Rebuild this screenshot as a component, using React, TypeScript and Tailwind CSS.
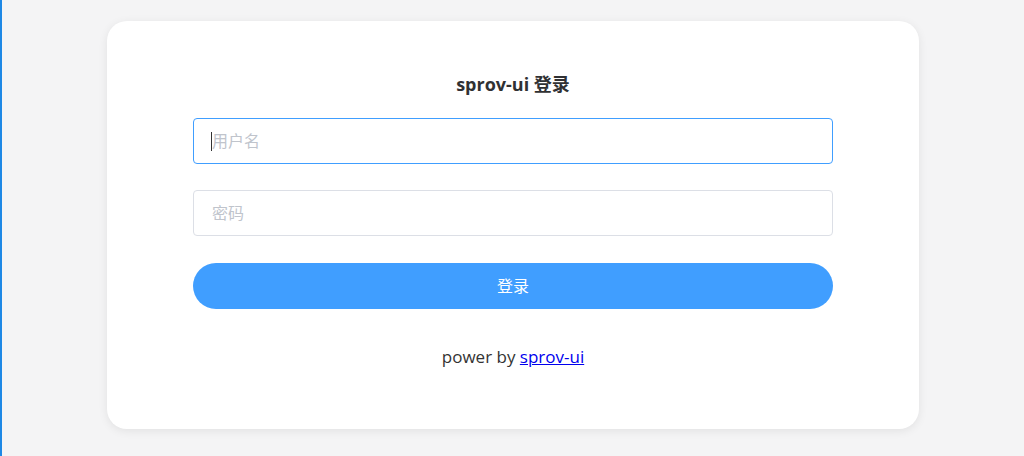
import { useState } from "react";

const font = { fontFamily: '"Open Sans", "Noto Sans CJK SC", sans-serif' };

export default function App() {
  const [username, setUsername] = useState("");
  const [password, setPassword] = useState("");

  return (
    <div
      className="min-h-[456px] w-full bg-[#f4f4f5] border-l-2 border-[#1e88e5] pt-[21px] pb-[28px]"
      style={font}
    >
      <div className="mx-auto w-[812px] rounded-[20px] bg-white shadow-[0_2px_10px_rgba(0,0,0,0.08)] px-[86px] pt-[51px] pb-[60px]">
        <h1 className="text-center text-[18px] leading-[24px] font-bold text-[#303133]">
          sprov-ui 登录
        </h1>

        {/* Form */}
        <div className="mt-[22px] flex flex-col">
          <div className="relative">
            <input
              value={username}
              onChange={(e) => setUsername(e.target.value)}
              placeholder="用户名"
              className="h-[46px] w-full rounded-[4px] border border-[#409eff] pl-[18px] pr-[15px] text-[16px] text-[#606266] outline-none placeholder:text-[#c0c4cc]"
            />
            {username === "" && (
              <span className="pointer-events-none absolute left-[18px] top-[14px] h-[19px] w-px bg-[#333]" />
            )}
          </div>
          <input
            type="password"
            value={password}
            onChange={(e) => setPassword(e.target.value)}
            placeholder="密码"
            className="mt-[26px] h-[46px] w-full rounded-[4px] border border-[#dcdfe6] pl-[18px] pr-[15px] text-[16px] text-[#606266] outline-none placeholder:text-[#c0c4cc]"
          />
          <button className="mt-[27px] h-[46px] w-full rounded-full bg-[#409eff] text-[16px] text-white cursor-pointer">
            登录
          </button>
        </div>

        <p className="mt-[36px] text-center text-[17px] leading-[24px] text-[#333]">
          power by{" "}
          <a href="#" className="text-[#0000ee] underline">
            sprov-ui
          </a>
        </p>
      </div>
    </div>
  );
}
